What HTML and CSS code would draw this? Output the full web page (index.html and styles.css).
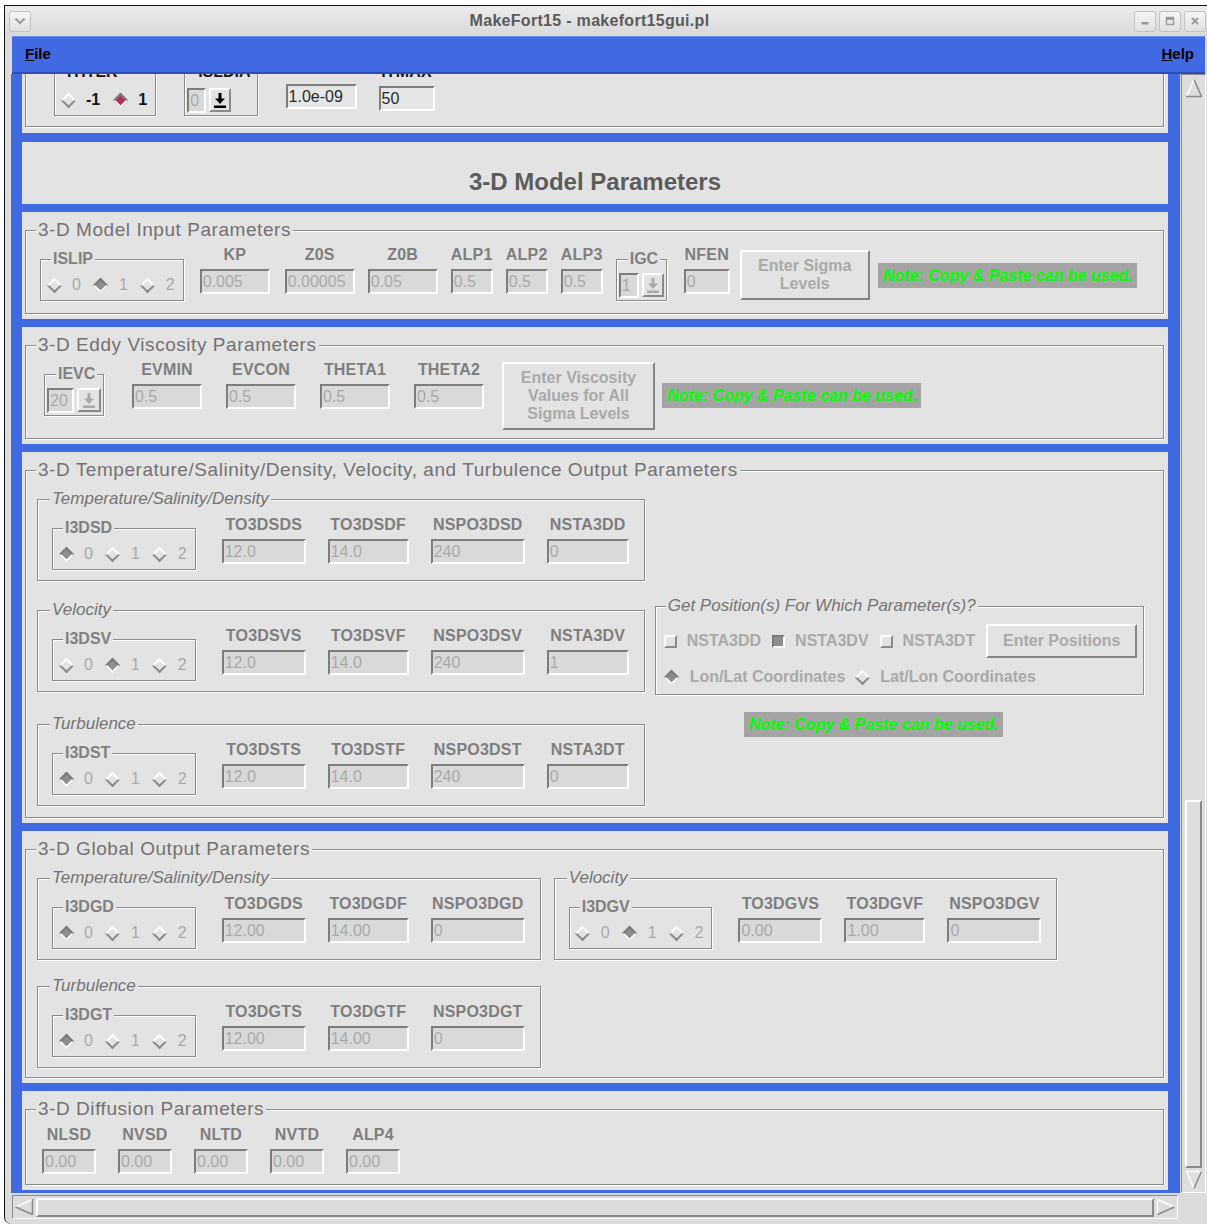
FILE: index.html
```html
<!DOCTYPE html>
<html lang="en">
<head>
<meta charset="utf-8">
<title>MakeFort15 - makefort15gui.pl</title>
<link rel="stylesheet" href="styles.css">
</head>
<body>
<div class="window">
  <header class="titlebar">
    <span class="tbtn"><svg width="12" height="8" viewBox="0 0 12 8"><path d="M1.5 1.5 6 6l4.5-4.5" fill="none" stroke="#9a9a9a" stroke-width="2"/></svg></span>
    <span class="title">MakeFort15 - makefort15gui.pl</span>
    <span class="tbtns">
      <span class="tbtn"><svg width="10" height="10" viewBox="0 0 10 10"><rect x="1.5" y="6" width="7" height="2.5" fill="#9a9a9a"/></svg></span>
      <span class="tbtn"><svg width="10" height="10" viewBox="0 0 10 10"><rect x="1.5" y="1.5" width="7" height="7" fill="none" stroke="#9a9a9a" stroke-width="1.4"/><rect x="1.5" y="1.5" width="7" height="2.4" fill="#9a9a9a"/></svg></span>
      <span class="tbtn"><svg width="10" height="10" viewBox="0 0 10 10"><path d="M2 2l6 6M8 2 2 8" stroke="#9a9a9a" stroke-width="2"/></svg></span>
    </span>
  </header>

  <nav class="menubar">
    <span class="menu"><u>F</u>ile</span>
    <span class="menu"><u>H</u>elp</span>
  </nav>

  <div class="body">
    <div class="main">
      <div class="viewport">
        <div class="content">

          <!-- iterative solver settings (scrolled partly out of view) -->
          <section class="panel partial">
            <div class="group topless">
              <div class="row iter-row">
                <fieldset class="sub live"><legend>ITITER</legend>
                  <div class="radios">
                    <span class="radio"><i class="dia"></i>-1</span>
                    <span class="radio"><i class="dia on"></i>1</span>
                  </div>
                </fieldset>
                <fieldset class="sub combo-box live"><legend>ISLDIA</legend>
                  <div class="combo"><span class="entry w19">0</span><span class="arrowbtn"><svg width="12" height="15" viewBox="0 0 12 15"><path d="M4.5 0h3v5.5H11L6 11 1 5.5h3.5z" fill="currentColor"/><rect x="0" y="12.5" width="12" height="2.5" fill="currentColor"/></svg></span></div>
                </fieldset>
                <div class="field convcr"><span class="entry on w71">1.0e-09</span></div>
                <div class="field live mln6"><span class="lbl">ITMAX</span><span class="entry on w56">50</span></div>
              </div>
            </div>
          </section>

          <section class="panel heading-panel">
            <h1 class="heading">3-D Model Parameters</h1>
          </section>

          <section class="panel">
            <fieldset class="group model">
              <legend>3-D Model Input Parameters</legend>
              <div class="row model-row">
                <fieldset class="sub"><legend>ISLIP</legend>
                  <div class="radios">
                    <span class="radio"><i class="dia"></i>0</span>
                    <span class="radio"><i class="dia on"></i>1</span>
                    <span class="radio"><i class="dia"></i>2</span>
                  </div>
                </fieldset>
                <div class="field ml3"><span class="lbl">KP</span><span class="entry w70">0.005</span></div>
                <div class="field ml2"><span class="lbl">Z0S</span><span class="entry w70">0.00005</span></div>
                <div class="field"><span class="lbl">Z0B</span><span class="entry w70">0.05</span></div>
                <div class="field"><span class="lbl">ALP1</span><span class="entry w42">0.5</span></div>
                <div class="field"><span class="lbl">ALP2</span><span class="entry w42">0.5</span></div>
                <div class="field"><span class="lbl">ALP3</span><span class="entry w42">0.5</span></div>
                <fieldset class="sub combo-box"><legend>IGC</legend>
                  <div class="combo"><span class="entry w20">1</span><span class="arrowbtn"><svg width="12" height="15" viewBox="0 0 12 15"><path d="M4.5 0h3v5.5H11L6 11 1 5.5h3.5z" fill="currentColor"/><rect x="0" y="12.5" width="12" height="2.5" fill="currentColor"/></svg></span></div>
                </fieldset>
                <div class="field ml4"><span class="lbl">NFEN</span><span class="entry w46">0</span></div>
                <div class="btn sigma mln3">Enter Sigma<br>Levels</div>
                <span class="note mln5">Note: Copy &amp; Paste can be used.</span>
              </div>
            </fieldset>
          </section>

          <section class="panel">
            <fieldset class="group eddy">
              <legend>3-D Eddy Viscosity Parameters</legend>
              <div class="row eddy-row">
                <fieldset class="sub combo-box ml4"><legend>IEVC</legend>
                  <div class="combo"><span class="entry w27">20</span><span class="arrowbtn wide">
                    <svg width="12" height="15" viewBox="0 0 12 15"><path d="M4.5 0h3v5.5H11L6 11 1 5.5h3.5z" fill="currentColor"/><rect x="0" y="12.5" width="12" height="2.5" fill="currentColor"/></svg></span></div>
                </fieldset>
                <div class="field ml4"><span class="lbl">EVMIN</span><span class="entry w70">0.5</span></div>
                <div class="field"><span class="lbl">EVCON</span><span class="entry w70">0.5</span></div>
                <div class="field"><span class="lbl">THETA1</span><span class="entry w70">0.5</span></div>
                <div class="field"><span class="lbl">THETA2</span><span class="entry w70">0.5</span></div>
                <div class="btn visc mln6">Enter Viscosity<br>Values for All<br>Sigma Levels</div>
                <span class="note mln17">Note: Copy &amp; Paste can be used.</span>
              </div>
            </fieldset>
          </section>

          <section class="panel">
            <fieldset class="group temp">
              <legend>3-D Temperature/Salinity/Density, Velocity, and Turbulence Output Parameters</legend>
              <div class="outgrid">
                <fieldset class="sec"><legend>Temperature/Salinity/Density</legend>
                  <div class="srow">
                    <fieldset class="sub"><legend>I3DSD</legend>
                      <div class="radios">
                        <span class="radio"><i class="dia on"></i>0</span>
                        <span class="radio"><i class="dia"></i>1</span>
                        <span class="radio"><i class="dia"></i>2</span>
                      </div>
                    </fieldset>
                    <div class="field"><span class="lbl">TO3DSDS</span><span class="entry w84">12.0</span></div>
                    <div class="field"><span class="lbl">TO3DSDF</span><span class="entry w81">14.0</span></div>
                    <div class="field"><span class="lbl">NSPO3DSD</span><span class="entry w94">240</span></div>
                    <div class="field"><span class="lbl">NSTA3DD</span><span class="entry w82">0</span></div>
                  </div>
                </fieldset>
                <div></div>

                <fieldset class="sec"><legend>Velocity</legend>
                  <div class="srow">
                    <fieldset class="sub"><legend>I3DSV</legend>
                      <div class="radios">
                        <span class="radio"><i class="dia"></i>0</span>
                        <span class="radio"><i class="dia on"></i>1</span>
                        <span class="radio"><i class="dia"></i>2</span>
                      </div>
                    </fieldset>
                    <div class="field"><span class="lbl">TO3DSVS</span><span class="entry w84">12.0</span></div>
                    <div class="field"><span class="lbl">TO3DSVF</span><span class="entry w81">14.0</span></div>
                    <div class="field"><span class="lbl">NSPO3DSV</span><span class="entry w94">240</span></div>
                    <div class="field"><span class="lbl">NSTA3DV</span><span class="entry w82">1</span></div>
                  </div>
                </fieldset>
                <fieldset class="sec pos"><legend>Get Position(s) For Which Parameter(s)?</legend>
                  <div class="pos-row">
                    <span class="check"><i class="box"></i>NSTA3DD</span>
                    <span class="check"><i class="box on"></i>NSTA3DV</span>
                    <span class="check"><i class="box"></i>NSTA3DT</span>
                    <div class="btn posbtn">Enter Positions</div>
                  </div>
                  <div class="pos-row radios wide">
                    <span class="radio bold"><i class="dia on"></i>Lon/Lat Coordinates</span>
                    <span class="radio bold"><i class="dia"></i>Lat/Lon Coordinates</span>
                  </div>
                </fieldset>

                <fieldset class="sec"><legend>Turbulence</legend>
                  <div class="srow">
                    <fieldset class="sub"><legend>I3DST</legend>
                      <div class="radios">
                        <span class="radio"><i class="dia on"></i>0</span>
                        <span class="radio"><i class="dia"></i>1</span>
                        <span class="radio"><i class="dia"></i>2</span>
                      </div>
                    </fieldset>
                    <div class="field"><span class="lbl">TO3DSTS</span><span class="entry w84">12.0</span></div>
                    <div class="field"><span class="lbl">TO3DSTF</span><span class="entry w81">14.0</span></div>
                    <div class="field"><span class="lbl">NSPO3DST</span><span class="entry w94">240</span></div>
                    <div class="field"><span class="lbl">NSTA3DT</span><span class="entry w82">0</span></div>
                  </div>
                </fieldset>
                <span class="note grid-note">Note: Copy &amp; Paste can be used.</span>
              </div>
            </fieldset>
          </section>

          <section class="panel">
            <fieldset class="group global">
              <legend>3-D Global Output Parameters</legend>
              <div class="outgrid global">
                <fieldset class="sec"><legend>Temperature/Salinity/Density</legend>
                  <div class="srow">
                    <fieldset class="sub"><legend>I3DGD</legend>
                      <div class="radios">
                        <span class="radio"><i class="dia on"></i>0</span>
                        <span class="radio"><i class="dia"></i>1</span>
                        <span class="radio"><i class="dia"></i>2</span>
                      </div>
                    </fieldset>
                    <div class="field"><span class="lbl">TO3DGDS</span><span class="entry w84">12.00</span></div>
                    <div class="field"><span class="lbl">TO3DGDF</span><span class="entry w81">14.00</span></div>
                    <div class="field"><span class="lbl">NSPO3DGD</span><span class="entry w94">0</span></div>
                  </div>
                </fieldset>
                <fieldset class="sec"><legend>Velocity</legend>
                  <div class="srow">
                    <fieldset class="sub"><legend>I3DGV</legend>
                      <div class="radios">
                        <span class="radio"><i class="dia"></i>0</span>
                        <span class="radio"><i class="dia on"></i>1</span>
                        <span class="radio"><i class="dia"></i>2</span>
                      </div>
                    </fieldset>
                    <div class="field"><span class="lbl">TO3DGVS</span><span class="entry w84">0.00</span></div>
                    <div class="field"><span class="lbl">TO3DGVF</span><span class="entry w81">1.00</span></div>
                    <div class="field"><span class="lbl">NSPO3DGV</span><span class="entry w94">0</span></div>
                  </div>
                </fieldset>
                <fieldset class="sec"><legend>Turbulence</legend>
                  <div class="srow">
                    <fieldset class="sub"><legend>I3DGT</legend>
                      <div class="radios">
                        <span class="radio"><i class="dia on"></i>0</span>
                        <span class="radio"><i class="dia"></i>1</span>
                        <span class="radio"><i class="dia"></i>2</span>
                      </div>
                    </fieldset>
                    <div class="field"><span class="lbl">TO3DGTS</span><span class="entry w84">12.00</span></div>
                    <div class="field"><span class="lbl">TO3DGTF</span><span class="entry w81">14.00</span></div>
                    <div class="field"><span class="lbl">NSPO3DGT</span><span class="entry w94">0</span></div>
                  </div>
                </fieldset>
              </div>
            </fieldset>
          </section>

          <section class="panel">
            <fieldset class="group diff">
              <legend>3-D Diffusion Parameters</legend>
              <div class="row diff-row">
                <div class="field"><span class="lbl">NLSD</span><span class="entry w54">0.00</span></div>
                <div class="field"><span class="lbl">NVSD</span><span class="entry w54">0.00</span></div>
                <div class="field"><span class="lbl">NLTD</span><span class="entry w54">0.00</span></div>
                <div class="field"><span class="lbl">NVTD</span><span class="entry w54">0.00</span></div>
                <div class="field"><span class="lbl">ALP4</span><span class="entry w54">0.00</span></div>
              </div>
            </fieldset>
          </section>

        </div>
      </div>

      <div class="vscroll">
        <svg class="sarrow" width="18" height="20" viewBox="0 0 18 20"><path d="M9 1.5 1.5 18.5" stroke="#fff" stroke-width="1.5"/><path d="M9 1.5 16.5 18.5M1 18.5h16" stroke="#8a8a8a" stroke-width="1.5"/></svg>
        <div class="trough"><div class="thumb"></div></div>
        <svg class="sarrow" width="18" height="20" viewBox="0 0 18 20"><path d="M1 1.5h16M1.5 1.5 9 18.5" stroke="#fff" stroke-width="1.5"/><path d="M16.5 1.5 9 18.5" stroke="#8a8a8a" stroke-width="1.5"/></svg>
      </div>
    </div>

    <div class="hscroll">
      <svg class="harrow" width="20" height="18" viewBox="0 0 20 18"><path d="M1.5 9 18.5 1.5" stroke="#fff" stroke-width="1.5"/><path d="M1.5 9 18.5 16.5M18.5 1v16" stroke="#8a8a8a" stroke-width="1.5"/></svg>
      <div class="hthumb"></div>
      <svg class="harrow" width="20" height="18" viewBox="0 0 20 18"><path d="M1.5 1v16M1.5 1.5 18.5 9" stroke="#fff" stroke-width="1.5"/><path d="M1.5 16.5 18.5 9" stroke="#8a8a8a" stroke-width="1.5"/></svg>
    </div>
  </div>
</div>
</body>
</html>
```

FILE: styles.css
```css
* { box-sizing: border-box; }

html, body { margin: 0; padding: 0; }

body {
  width: 1207px;
  height: 1224px;
  overflow: hidden;
  background: #fff;
  font-family: "Liberation Sans", Arial, Helvetica, sans-serif;
}

/* ---------- window frame ---------- */
.window {
  margin: 5px 0 0 4px;
  width: 1203px;
  height: 1219px;
  border-top: 1px solid #111;
  border-left: 1px solid #111;
  border-bottom-left-radius: 7px;
  background: #dcdcdc;
  display: flex;
  flex-direction: column;
  overflow: hidden;
}

.titlebar {
  height: 30px;
  flex: none;
  display: flex;
  align-items: center;
  padding: 0 1px 0 4px;
  background: linear-gradient(#ececec, #d8d8d8);
}

.title {
  flex: 1;
  text-align: center;
  padding-left: 14px;
  font-size: 16px;
  letter-spacing: 0.3px;
  font-weight: bold;
  color: #5a5a5a;
}

.tbtns { display: flex; gap: 3px; }

.tbtn {
  width: 22px;
  height: 21px;
  border: 1px solid #c2c2c2;
  border-radius: 3px;
  background: linear-gradient(#f6f6f6, #e0e0e0);
  display: flex;
  align-items: center;
  justify-content: center;
}

.menubar {
  height: 38px;
  flex: none;
  margin: 0 2px 0 7px;
  padding: 0 11px 2px 13px;
  background: #4169e1;
  border-top: 1px solid #6f8ceb;
  border-bottom: 2px solid #2d4db6;
  display: flex;
  align-items: center;
  justify-content: space-between;
  font-size: 15px;
  font-weight: bold;
  color: #000;
}

.body { flex: 1; display: flex; flex-direction: column; }

.main { height: 1119px; flex: none; display: flex; }

.viewport {
  margin-left: 6px;
  width: 1169px;
  background: #4169e1;
  overflow: hidden;
}

.content {
  display: flex;
  flex-direction: column;
  gap: 8px;
  padding: 0 12px 0 11px;
}

/* ---------- panels and frames ---------- */
.panel {
  background: #e3e3e3;
  padding: 8px 4px 5px 3px;
}

.partial { margin-top: -11px; padding-top: 0; padding-bottom: 6px; }

.heading-panel { margin-top: 1px; padding: 26px 0 8px; }

.heading {
  margin: 0;
  text-align: center;
  font-size: 24px;
  line-height: 28px;
  font-weight: bold;
  color: #5c5c5c;
}

fieldset {
  margin: 0;
  padding: 0;
  min-width: 0;
  border: 1px solid #8b8b8b;
  box-shadow: inset 1px 1px 0 #fff, 1px 1px 0 #fff;
}

legend {
  padding: 0 2px;
  background: #e3e3e3;
  white-space: nowrap;
}

.group { padding: 6px 8px 10px 14px; }
.group > legend {
  margin-left: -4px;
  font-size: 19px;
  line-height: 20px;
  letter-spacing: 0.55px;
  color: #727272;
}
.group.model { padding-bottom: 12px; }
.group.eddy { padding-bottom: 8px; }
.group.temp { padding-bottom: 11px; }
.group.global { padding-bottom: 9px; }
.group.diff { padding-top: 7px; }

.topless {
  border: 1px solid #8b8b8b;
  border-top: 0;
  box-shadow: inset 1px 0 0 #fff, 1px 1px 0 #fff;
  padding: 0 8px 10px 14px;
}

.sub { padding: 8px 8px 6px 5px; }
.sub > legend {
  margin-left: 5px;
  font-size: 16px;
  line-height: 18px;
  font-weight: bold;
  color: #808080;
}
.sub.live > legend { color: #151515; }

.combo-box { padding: 5px 2px 2px 2px; }
.combo-box > legend { margin-left: 9px; }

.sec { padding: 8px 15px 10px 14px; }
.sec > legend {
  margin-left: -2px;
  font-size: 17px;
  line-height: 18px;
  font-style: italic;
  color: #747474;
}

/* ---------- rows ---------- */
.row { display: flex; align-items: flex-start; }

.iter-row { gap: 28px; margin-left: 14px; }
.iter-row > .sub { padding-top: 10px; }
.iter-row > .combo-box { padding-top: 7px; padding-right: 4px; }
.iter-row > .convcr { margin-top: 21px; }

.model-row { gap: 13px; }
.model-row > .sub { margin-top: 4px; }
.model-row > .btn { margin-top: 4px; }
.model-row > .note { margin-top: 17px; }

.eddy-row { gap: 24px; }
.eddy-row > .sub { margin-top: 4px; }
.eddy-row > .btn { margin-top: 1px; }
.eddy-row > .note { margin-top: 22px; }

.diff-row { gap: 22px; padding-left: 2px; }

.outgrid {
  display: grid;
  grid-template-columns: auto auto;
  justify-content: start;
  align-items: start;
  column-gap: 10px;
  row-gap: 20px;
  padding-top: 4px;
  margin-left: -3px;
}
.outgrid.global { column-gap: 13px; row-gap: 17px; }

.srow { display: flex; align-items: flex-start; gap: 22px; }
.srow > .sub { margin-top: 3px; margin-right: 4px; }

.ml2 { margin-left: 2px; }
.ml3 { margin-left: 3px; }
.ml4 { margin-left: 4px; }
.mln3 { margin-left: -3px; }
.mln5 { margin-left: -5px; }
.mln6 { margin-left: -6px; }
.mln17 { margin-left: -17px; }

/* ---------- widgets ---------- */
.field {
  display: flex;
  flex-direction: column;
  align-items: center;
  gap: 5px;
}

.lbl {
  font-size: 16px;
  line-height: 18px;
  font-weight: bold;
  letter-spacing: 0.2px;
  color: #7e7e7e;
  white-space: nowrap;
}
.live .lbl { color: #151515; }

.entry {
  display: block;
  height: 25px;
  border: 2px solid;
  border-color: #7d7d7d #fff #fff #7d7d7d;
  background: #d9d9d9;
  color: #a9a9a9;
  font-size: 16px;
  line-height: 21px;
  padding-left: 1px;
  white-space: nowrap;
  overflow: hidden;
}
.entry.on { background: #e6e6e6; color: #2a2a2a; }

.w19 { width: 19px; }
.w20 { width: 20px; }
.w27 { width: 27px; }
.w42 { width: 42px; }
.w46 { width: 46px; }
.w54 { width: 54px; }
.w56 { width: 56px; }
.w70 { width: 70px; }
.w71 { width: 71px; }
.w81 { width: 81px; }
.w82 { width: 82px; }
.w84 { width: 84px; }
.w94 { width: 94px; }

.radios { display: flex; align-items: center; gap: 12px; }

.radio {
  display: flex;
  align-items: center;
  gap: 10px;
  font-size: 16px;
  line-height: 18px;
  color: #a9a9a9;
  white-space: nowrap;
}
.radio.bold { font-weight: bold; }
.live .radio { color: #151515; font-weight: bold; }

/* diamond indicator: a square turned on its corner */
.dia {
  display: block;
  flex: none;
  width: 11px;
  height: 11px;
  margin: 0 2.5px;
  transform: rotate(45deg);
  border: 2px solid;
  border-color: #fff #8a8a8a #8a8a8a #fff;
  background: #e3e3e3;
}
.dia.on {
  border-color: #7a7a7a #fff #fff #7a7a7a;
  background: #8e8e8e;
}
.live .dia.on { background: #b03060; }

.check {
  display: flex;
  align-items: center;
  gap: 10px;
  font-size: 16px;
  line-height: 18px;
  font-weight: bold;
  color: #a9a9a9;
  white-space: nowrap;
}

.box {
  display: block;
  width: 13px;
  height: 13px;
  border: 2px solid;
  border-color: #fff #8a8a8a #8a8a8a #fff;
  background: #e3e3e3;
}
.box.on {
  border-color: #7a7a7a #fff #fff #7a7a7a;
  background: #8e8e8e;
}

.combo { display: flex; align-items: flex-start; gap: 3px; }

.arrowbtn {
  width: 22px;
  height: 24px;
  border: 2px solid;
  border-color: #fff #8a8a8a #8a8a8a #fff;
  display: flex;
  align-items: center;
  justify-content: center;
  color: #a9a9a9;
}
.arrowbtn.wide { width: 24px; }
.live .arrowbtn { color: #000; }

.btn {
  flex: none;
  border: 2px solid;
  border-color: #fff #858585 #858585 #fff;
  background: #e3e3e3;
  padding: 5px 6px;
  text-align: center;
  font-size: 16px;
  line-height: 18px;
  font-weight: bold;
  color: #a9a9a9;
  white-space: nowrap;
}
.sigma { width: 130px; }
.visc { width: 153px; }
.posbtn { width: 151px; padding: 6px; }

.note {
  flex: none;
  height: 25px;
  padding: 0 4px 0 5px;
  background: #a4a4a4;
  color: #00ff00;
  font-size: 16px;
  line-height: 25px;
  font-weight: bold;
  font-style: italic;
  white-space: nowrap;
}

.grid-note { justify-self: start; margin: -3px 0 0 89px; }

.pos { margin-top: -4px; padding: 9px 6px 8px 8px; }
.pos > legend { margin-left: 2px; }
.pos-row { display: flex; align-items: center; gap: 11px; }
.pos-row + .pos-row { margin-top: 10px; }
.pos-row.wide { gap: 9px; }

/* ---------- scrollbars ---------- */
.vscroll {
  margin-left: 1px;
  width: 25px;
  border: 1px solid;
  border-color: #8a8a8a #fff #fff #8a8a8a;
  background: #dedede;
  display: flex;
  flex-direction: column;
  align-items: center;
  padding: 3px 2px 2px;
}

.sarrow, .harrow { flex: none; display: block; }

.trough {
  flex: 1;
  width: 100%;
  display: flex;
  flex-direction: column;
  justify-content: flex-end;
  padding: 2px 1px;
}

.thumb {
  height: 368px;
  border: 2px solid;
  border-color: #fff #8a8a8a #8a8a8a #fff;
}

.hscroll {
  margin: 2px 0 0 7px;
  width: 1166px;
  height: 24px;
  flex: none;
  border: 1px solid;
  border-color: #8a8a8a #fff #fff #8a8a8a;
  display: flex;
  align-items: center;
  padding: 0 1px;
}

.hthumb {
  flex: 1;
  height: 19px;
  margin: 0 2px;
  border: 2px solid;
  border-color: #fff #8a8a8a #8a8a8a #fff;
}
```
